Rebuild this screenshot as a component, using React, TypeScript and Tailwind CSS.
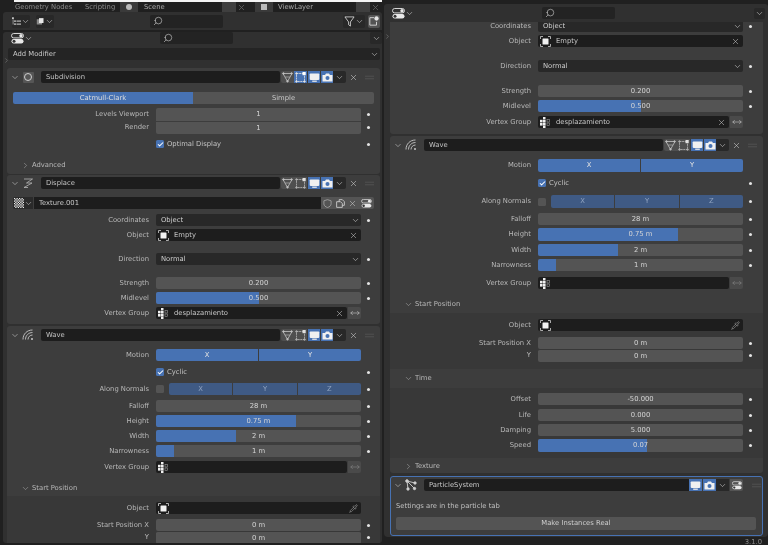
import React from "react";
import { Search, Pipette, MoveHorizontal, X, ChevronDown, ChevronRight, Check } from "lucide-react";

const FONT = "[font-family:'DejaVu_Sans',sans-serif]";

const Chev = ({ c = "" }: { c?: string }) => <ChevronDown className={`w-[9px] h-[9px] text-[#c8c8c8] shrink-0 ${c}`} strokeWidth={1.6} />;

const Toggles = ({ c = "w-[13px] h-[11px]" }: { c?: string }) => (
  <svg viewBox="0 0 13 11" className={c}>
    <rect x="0.5" y="0.5" width="12" height="4.4" rx="2.2" fill="none" stroke="#e8e8e8" strokeWidth="0.9" />
    <circle cx="10" cy="2.7" r="1.7" fill="#e8e8e8" />
    <rect x="0.5" y="6" width="12" height="4.4" rx="2.2" fill="#e8e8e8" />
    <circle cx="3" cy="8.2" r="1.5" fill="#333" />
  </svg>
);

const EmptyIcon = () => (
  <svg viewBox="0 0 11 11" className="w-[11px] h-[11px] shrink-0">
    <rect x="2.5" y="2.5" width="6" height="6" rx="0.6" fill="#f2f2f2" />
    <path d="M0.5 3V0.5H3M8 0.5H10.5V3M0.5 8V10.5H3M8 10.5H10.5V8" fill="none" stroke="#cfcfcf" strokeWidth="0.8" />
  </svg>
);

const VGroup = () => (
  <svg viewBox="0 0 11 11" className="w-[11px] h-[11px] shrink-0" fill="#f0f0f0">
    <rect x="3" y="0" width="2.5" height="2.5" />
    <rect x="0" y="2.8" width="2.6" height="2.6" />
    <rect x="3" y="3" width="2.6" height="2.6" />
    <rect x="0" y="6" width="2.6" height="2.6" />
    <rect x="3" y="6" width="2.6" height="2.6" />
    <rect x="3" y="8.8" width="2.5" height="2.2" />
    <rect x="7" y="2.5" width="2.5" height="2.5" fill="none" stroke="#999" strokeWidth="0.6" />
    <rect x="7" y="6" width="2.5" height="2.5" fill="none" stroke="#999" strokeWidth="0.6" />
  </svg>
);

const Cage = () => (
  <svg viewBox="0 0 11 11" className="w-[11px] h-[11px]" fill="none" stroke="#c4c4c4" strokeWidth="0.8">
    <path d="M1 1.5H10L5.5 9.5Z" />
    <path d="M3.2 5H7.8" strokeWidth="0.6" />
    <circle cx="1.5" cy="1.5" r="0.8" fill="#c4c4c4" />
    <circle cx="9.5" cy="1.5" r="0.8" fill="#c4c4c4" />
    <circle cx="5.5" cy="9.3" r="0.8" fill="#c4c4c4" />
  </svg>
);
const Edit = ({ on }: { on?: boolean }) => (
  <svg viewBox="0 0 11 11" className="w-[11px] h-[11px]" fill="none" stroke={on ? "#e2e2e2" : "#b4b4b4"} strokeWidth="0.8">
    <rect x="1.5" y="1.5" width="8" height="8" strokeDasharray="2 0.6" />
    <rect x="7.5" y="0" width="3.2" height="3.2" fill={on ? "#fff" : "#e0e0e0"} stroke="none" />
    <circle cx="1.5" cy="1.5" r="0.8" fill={on ? "#e2e2e2" : "#b4b4b4"} />
    <circle cx="1.5" cy="9.5" r="0.8" fill={on ? "#e2e2e2" : "#b4b4b4"} />
    <circle cx="9.5" cy="9.5" r="0.8" fill={on ? "#e2e2e2" : "#b4b4b4"} />
  </svg>
);
const Monitor = () => (
  <svg viewBox="0 0 11 11" className="w-[11px] h-[11px]">
    <rect x="0.7" y="1.5" width="9.6" height="6.4" rx="0.8" fill="#f0f0f0" />
    <rect x="3.2" y="8.6" width="4.6" height="1.2" fill="#f0f0f0" />
  </svg>
);
const Camera = () => (
  <svg viewBox="0 0 11 11" className="w-[11px] h-[11px]">
    <path d="M0.5 3H3L4 1.5H7L8 3H10.5V9.5H0.5Z" fill="#f0f0f0" />
    <circle cx="5.5" cy="6" r="2" fill="#4772b3" />
  </svg>
);
const Grip = ({ c = "" }: { c?: string }) => (
  <svg viewBox="0 0 14 6" className={`w-[9px] h-[5px] ${c}`} stroke="#5c5c5c" strokeWidth="1">
    <path d="M0 1H14M0 5H14" />
  </svg>
);

const SubIcon = () => (
  <div className="w-[11px] h-[11px] rounded-[1px] bg-[#565656] flex items-center justify-center">
    <div className="w-[8px] h-[8px] rounded-full border border-[#d0d0d0]" />
  </div>
);
const DispIcon = () => (
  <svg viewBox="0 0 12 12" className="w-[12px] h-[12px]" fill="none" stroke="#b8b8b8" strokeWidth="0.8">
    <path d="M2 2H10.5L4.5 6H10L2 10.5M2 10.5H6" />
  </svg>
);
const WaveIcon = () => (
  <svg viewBox="0 0 12 12" className="w-[12px] h-[12px]" fill="none" stroke="#c8c8c8" strokeWidth="0.9">
    <path d="M1 10.5C1 5 5 1 10.5 1M3.5 10.5C3.5 6.6 6.6 3.5 10.5 3.5M6 10.5C6 8 8 6 10.5 6" />
    <circle cx="10" cy="10" r="1" fill="#c8c8c8" stroke="none" />
  </svg>
);
const PartIcon = () => (
  <svg viewBox="0 0 12 12" className="w-[12px] h-[12px]" fill="none" stroke="#d0d0d0" strokeWidth="0.9">
    <path d="M2 2L3 10M2 2L10 4M2 2L9 9" />
    <circle cx="2" cy="2" r="1.3" fill="#d0d0d0" />
    <circle cx="3" cy="10" r="1.2" fill="#d0d0d0" />
    <circle cx="10" cy="4" r="1.2" fill="#d0d0d0" />
    <circle cx="9.5" cy="9.5" r="1.2" fill="#d0d0d0" />
  </svg>
);

const HBtn = ({ bg, children, c = "" }: { bg: string; children: React.ReactNode; c?: string }) => (
  <div className={`w-[13px] h-[12px] flex items-center justify-center shrink-0 ${bg} ${c}`}>{children}</div>
);
const BLUE = "bg-[#4772b3]";
const GREY = "bg-[#4f4f4f]";

const Header = ({ icon, name, edit }: { icon: React.ReactNode; name: string; edit?: boolean }) => (
  <div className="flex items-center h-[12px] pl-[3px]">
    <Chev c="w-[10px]" />
    <div className="w-[12px] ml-[2px] flex justify-center">{icon}</div>
    <div className="ml-[7px] w-[239px] h-[12px] rounded-[2px] bg-[#1d1d1d] pl-[5px] flex items-center text-[#c4c4c4]">{name}</div>
    <HBtn bg={GREY} c="ml-[1px] rounded-l-[2px]"><Cage /></HBtn>
    <HBtn bg={edit ? BLUE : GREY}><Edit on={edit} /></HBtn>
    <HBtn bg={BLUE} c="border-l border-[#3a3a3a]"><Monitor /></HBtn>
    <HBtn bg={BLUE} c="border-l border-[#3a3a3a]"><Camera /></HBtn>
    <div className="w-[13px] h-[12px] bg-[#282828] rounded-r-[2px] flex items-center justify-center"><Chev /></div>
    <div className="w-[14px] flex justify-center"><X className="w-[9px] h-[9px] text-[#d0d0d0]" strokeWidth={1.5} /></div>
    <Grip c="ml-[5px]" />
  </div>
);

const Dot = () => (
  <div className="w-[14px] flex justify-center shrink-0"><div className="w-[3px] h-[3px] rounded-full bg-[#e4e4e4]" /></div>
);

const Row = ({ label, children, dot = true, r, c = "h-[12px]" }: { label?: string; children: React.ReactNode; dot?: boolean; r?: boolean; c?: string }) => (
  <div className={`flex items-center ${c}`}>
    <div className={`${r ? "w-[141px]" : "w-[142px]"} text-right text-[#b8b8b8] shrink-0 whitespace-nowrap`}>{label}</div>
    <div className="ml-[7px] w-[205px] h-full flex">{children}</div>
    {dot && <Dot />}
  </div>
);

const Num = ({ v, fill = 0, t = "" }: { v: string; fill?: number; t?: string }) => (
  <div className={`relative w-full h-full bg-[#545454] rounded-[2px] overflow-hidden flex items-center justify-center text-[#d6d6d6] ${t}`}>
    {fill > 0 && <div className="absolute left-0 top-0 bottom-0 bg-[#4772b3]" style={{ width: `${fill}%` }} />}
    <span className="relative">{v}</span>
  </div>
);

const Sel = ({ v }: { v: string }) => (
  <div className="w-full h-full bg-[#282828] rounded-[2px] flex items-center justify-between pl-[5px] pr-[1px] text-[#cfcfcf]">{v}<Chev /></div>
);

const Ptr = ({ icon, v, end }: { icon: React.ReactNode; v?: string; end: React.ReactNode }) => (
  <div className="w-full h-full bg-[#1d1d1d] rounded-[2px] flex items-center pl-[2px] pr-[3px] text-[#c8c8c8]">
    {icon}<span className="ml-[5px] flex-1">{v}</span>{end}
  </div>
);
const XS = () => <X className="w-[9px] h-[9px] text-[#cfcfcf]" strokeWidth={1.4} />;

const VG = ({ name }: { name?: string }) => (
  <>
    <div className="w-[191px] h-full">
      <Ptr icon={<VGroup />} v={name} end={name ? <XS /> : null} />
    </div>
    <div className="ml-[1px] w-[13px] h-full bg-[#4a4a4a] rounded-r-[2px] flex items-center justify-center">
      <MoveHorizontal className={`w-[10px] h-[10px] ${name ? "text-[#dcdcdc]" : "text-[#909090]"}`} strokeWidth={1.2} />
    </div>
  </>
);

const Check1 = ({ label }: { label?: string }) => (
  <div className="flex items-center text-[#c4c4c4]">
    <div className="w-[8px] h-[8px] rounded-[1.5px] bg-[#4772b3] flex items-center justify-center">
      <Check className="w-[7px] h-[7px] text-white" strokeWidth={3.5} />
    </div>
    <span className="ml-[3px]">{label}</span>
  </div>
);

const Seg = ({ items, dim }: { items: string[]; dim?: boolean }) => (
  <div className="w-full h-full flex rounded-[2px] overflow-hidden gap-px">
    {items.map((i) => (
      <div key={i} className={`flex-1 flex items-center justify-center ${dim ? "bg-[#3f5a84] text-[#8fa2bf]" : "bg-[#4772b3] text-[#e2e2e2]"}`}>{i}</div>
    ))}
  </div>
);

const Search1 = ({ c }: { c: string }) => (
  <div className={`h-[12px] w-[73px] rounded-[2px] bg-[#232323] flex items-center pl-[3px] ${c}`}>
    <Search className="w-[10px] h-[10px] text-[#d8d8d8] -scale-x-100" strokeWidth={1.4} />
  </div>
);

const SubHead = ({ label, open, c = "" }: { label: string; open?: boolean; c?: string }) => (
  <div className={`flex items-center pl-[14px] text-[#b8b8b8] ${c}`}>
    {open ? <ChevronDown className="w-[9px] h-[9px]" strokeWidth={1.3} /> : <ChevronRight className="w-[9px] h-[9px]" strokeWidth={1.3} />}
    <span className="ml-[2px]">{label}</span>
  </div>
);

const Panel = ({ children, c = "" }: { children: React.ReactNode; c?: string }) => (
  <div className={`w-[373px] rounded-[3px] bg-[#3d3d3d] ${c}`}>{children}</div>
);

const TopBar = () => (
  <div className="h-[10px] flex items-center overflow-hidden text-[#8c8c8c]">
    <span className="ml-[15px] w-[70px]">Geometry Nodes</span>
    <span className="w-[35px]">Scripting</span>
    <div className="w-[18px] h-[10px] bg-[#3a3a3a] flex items-center justify-center"><div className="w-[6px] h-[6px] rounded-full bg-[#bbb]" /></div>
    <div className="ml-[2px] w-[80px] h-[10px] bg-[#1f1f1f] pl-[4px] text-[#aaa] flex items-center">Scene</div>
    <div className="ml-[2px] w-[14px] h-[10px] bg-[#3f3f3f]" />
    <X className="ml-[1px] w-[9px] h-[9px] text-[#666]" />
    <div className="ml-[9px] w-[18px] h-[10px] bg-[#3a3a3a] flex items-center justify-center"><div className="w-[6px] h-[6px] bg-[#bbb]" /></div>
    <div className="ml-[1px] w-[80px] h-[10px] bg-[#1f1f1f] pl-[4px] text-[#aaa] flex items-center">ViewLayer</div>
    <div className="ml-[2px] w-[14px] h-[10px] bg-[#3f3f3f]" />
    <X className="ml-[1px] w-[9px] h-[9px] text-[#666]" />
  </div>
);

const OutlinerIcon = () => (
  <svg viewBox="0 0 12 12" className="w-[11px] h-[11px]" fill="#dcdcdc">
    <rect x="0" y="0.5" width="2.5" height="2" />
    <rect x="3" y="4.5" width="2" height="2" />
    <rect x="3" y="8.5" width="2" height="2" />
    <rect x="6" y="4.8" width="6" height="1.3" />
    <rect x="6" y="8.8" width="6" height="1.3" />
    <rect x="1" y="3" width="0.8" height="7" />
  </svg>
);

const DispMode = () => (
  <svg viewBox="0 0 12 12" className="w-[11px] h-[11px]">
    <rect x="1" y="3" width="7" height="7" fill="#8a8a8a" />
    <path d="M4 1.5H10V8L4 8Z" fill="#e6e6e6" />
  </svg>
);

const NewIcon = () => (
  <svg viewBox="0 0 12 12" className="w-[10px] h-[10px]" fill="none" stroke="#e4e4e4">
    <path d="M6 2H1V11H9V7" />
    <circle cx="9" cy="3" r="2.6" fill="#e4e4e4" stroke="none" />
  </svg>
);

const Funnel = () => (
  <svg viewBox="0 0 12 12" className="w-[11px] h-[11px]" fill="none" stroke="#dcdcdc" strokeWidth="0.9">
    <path d="M1 1H11L7 6.5V11L5 9.5V6.5Z" />
  </svg>
);

const Left = () => (
  <div className="w-[382px] shrink-0 flex flex-col">
    <div className="h-[2px] ml-[14px] bg-[#f4f4f4]" />
    <TopBar />
    <div className="h-[18px] bg-[#303030] ml-[3px] flex items-center rounded-t-[3px]">
      <div className="ml-[9px] w-[18px] h-[13px] bg-[#282828] rounded-[2px] flex items-center justify-center"><OutlinerIcon /><Chev c="w-[7px] h-[7px]" /></div>
      <div className="ml-[6px] w-[18px] h-[13px] bg-[#282828] rounded-[2px] flex items-center justify-center"><DispMode /><Chev c="w-[7px] h-[7px]" /></div>
      <Search1 c="ml-[96px] h-[13px]" />
      <div className="ml-[120px] w-[22px] h-[13px] bg-[#282828] rounded-[2px] flex items-center justify-center"><Funnel /><Chev c="w-[7px] h-[7px]" /></div>
      <div className="ml-[3px] w-[12px] h-[13px] bg-[#545454] rounded-[2px] flex items-center justify-center"><NewIcon /></div>
    </div>
    <div className="relative mt-[2px] ml-[3px] h-[511px] bg-[#303030] rounded-[3px] overflow-hidden">
      <div className="flex items-center h-[12px] pl-[8px]">
        <Toggles />
        <Chev c="w-[7px] h-[7px]" />
        <Search1 c="ml-[127px]" />
        <div className="ml-[137px] w-[12px] h-[12px] bg-[#282828] rounded-[2px] flex items-center justify-center"><Chev /></div>
      </div>
      <div className="mt-[4px] ml-[5px] w-[372px] h-[12px] bg-[#242424] rounded-[2px] flex items-center justify-between pl-[5px] pr-[1px] text-[#c8c8c8]">Add Modifier<Chev /></div>
      <ChevronRight className="absolute left-0 top-[25px] w-[7px] h-[7px] text-[#999]" strokeWidth={1.5} />
      <div className="ml-[4px] mt-[8px] flex flex-col">
        <Panel c="pt-[3px] pb-[3px]">
          <Header icon={<SubIcon />} name="Subdivision" edit />
          <div className="mt-[9px] ml-[6px] w-[361px] h-[12px] flex rounded-[2px] overflow-hidden">
            <div className="w-[180px] bg-[#4772b3] text-[#dedede] flex items-center justify-center">Catmull-Clark</div>
            <div className="flex-1 bg-[#545454] text-[#c8c8c8] flex items-center justify-center">Simple</div>
          </div>
          <div className="mt-[4px]"><Row label="Levels Viewport" c="h-[13px]"><Num v="1" t="rounded-b-none" /></Row></div>
          <Row label="Render" c="h-[13px]"><Num v="1" t="rounded-t-none border-t border-[#3d3d3d]" /></Row>
          <div className="mt-[4px]"><Row><div className="h-full flex items-center"><Check1 label="Optimal Display" /></div></Row></div>
          <SubHead label="Advanced" c="mt-[9px] h-[12px]" />
        </Panel>
        <Panel c="mt-[1px] pt-[2px] pb-[5px]">
          <Header icon={<DispIcon />} name="Displace" />
          <div className="mt-[8px] ml-[6px] w-[361px] h-[12px] flex">
            <div className="w-[20px] h-full bg-[#2a2a2a] rounded-l-[2px] flex items-center justify-center">
              <svg viewBox="0 0 8 8" className="w-[10px] h-[10px]">
                <rect width="8" height="8" fill="#f0f0f0" />
                <path d="M1 0H2V1H1ZM3 0H4V1H3ZM5 0H6V1H5ZM7 0H8V1H7ZM0 1H1V2H0ZM2 1H3V2H2ZM4 1H5V2H4ZM6 1H7V2H6ZM1 2H2V3H1ZM3 2H4V3H3ZM5 2H6V3H5ZM7 2H8V3H7ZM0 3H1V4H0ZM2 3H3V4H2ZM4 3H5V4H4ZM6 3H7V4H6ZM1 4H2V5H1ZM3 4H4V5H3ZM5 4H6V5H5ZM7 4H8V5H7ZM0 5H1V6H0ZM2 5H3V6H2ZM4 5H5V6H4ZM6 5H7V6H6ZM1 6H2V7H1ZM3 6H4V7H3ZM5 6H6V7H5ZM7 6H8V7H7ZM0 7H1V8H0ZM2 7H3V8H2ZM4 7H5V8H4ZM6 7H7V8H6Z" fill="#222" />
              </svg>
              <Chev c="w-[7px] h-[7px]" />
            </div>
            <div className="w-[287px] ml-[1px] bg-[#1d1d1d] pl-[5px] flex items-center text-[#c8c8c8]">Texture.001</div>
            <div className="flex-1 bg-[#545454] rounded-r-[2px] flex items-center justify-around text-[#d8d8d8]">
              <svg viewBox="0 0 10 10" className="w-[9px] h-[9px]" fill="none" stroke="#a8a8a8" strokeWidth="0.9"><path d="M5 0.7L9 2V5.5C9 7.5 7 8.8 5 9.5C3 8.8 1 7.5 1 5.5V2Z" /></svg>
              <svg viewBox="0 0 10 10" className="w-[9px] h-[9px]" fill="none" stroke="#d8d8d8" strokeWidth="0.9"><path d="M3.5 3V0.7H7L9.3 3V7H7M0.7 3H5L7 5V9.3H0.7Z" /></svg>
              <XS />
              <Toggles c="w-[11px] h-[9px]" />
            </div>
          </div>
          <div className="mt-[5px]"><Row label="Coordinates"><Sel v="Object" /></Row></div>
          <div className="mt-[3px]"><Row label="Object" dot={false}><Ptr icon={<EmptyIcon />} v="Empty" end={<XS />} /></Row></div>
          <div className="mt-[12px]"><Row label="Direction"><Sel v="Normal" /></Row></div>
          <div className="mt-[12px]"><Row label="Strength"><Num v="0.200" /></Row></div>
          <div className="mt-[3px]"><Row label="Midlevel"><Num v="0.500" fill={50} /></Row></div>
          <div className="mt-[3px]"><Row label="Vertex Group" dot={false}><VG name="desplazamiento" /></Row></div>
        </Panel>
        <Panel c="mt-[2px] pt-[3px] pb-[2px]">
          <Header icon={<WaveIcon />} name="Wave" />
          <div className="mt-[8px]"><Row label="Motion" dot={false}><Seg items={["X", "Y"]} /></Row></div>
          <div className="mt-[5px]"><Row><div className="h-full flex items-center"><Check1 label="Cyclic" /></div></Row></div>
          <div className="mt-[5px]"><Row label="Along Normals"><div className="w-[8px] h-[8px] self-center rounded-[1.5px] bg-[#545454] shrink-0" /><div className="ml-[5px] flex-1"><Seg items={["X", "Y", "Z"]} dim /></div></Row></div>
          <div className="mt-[5px]"><Row label="Falloff"><Num v="28 m" /></Row></div>
          <div className="mt-[3px]"><Row label="Height"><Num v="0.75 m" fill={68.5} /></Row></div>
          <div className="mt-[3px]"><Row label="Width"><Num v="2 m" fill={39} /></Row></div>
          <div className="mt-[3px]"><Row label="Narrowness"><Num v="1 m" fill={9} /></Row></div>
          <div className="mt-[4px]"><Row label="Vertex Group" dot={false}><VG /></Row></div>
          <SubHead label="Start Position" open c="mt-[9px] h-[12px]" />
          <div className="mt-[2px] pt-[6px] bg-[#383838]">
            <Row label="Object" dot={false}><Ptr icon={<EmptyIcon />} end={<Pipette className="w-[9px] h-[9px] text-[#b0b0b0]" strokeWidth={1.4} />} /></Row>
            <div className="mt-[5px]"><Row label="Start Position X"><Num v="0 m" /></Row></div>
            <Row label="Y" c="h-[13px]"><Num v="0 m" t="border-t border-[#383838]" /></Row>
          </div>
        </Panel>
      </div>
    </div>
  </div>
);

const Right = () => (
  <div className="relative w-[384px] ml-[2px] mt-[4px] h-[541px] flex flex-col">
    <div className="h-[18px] bg-[#303030] rounded-t-[3px] flex items-center">
      <div className="ml-[8px] flex items-center"><Toggles /><Chev c="w-[7px] h-[7px]" /></div>
      <Search1 c="ml-[128px]" />
      <div className="ml-[139px] w-[11px] h-[11px] bg-[#282828] rounded-[2px] flex items-center justify-center"><Chev /></div>
    </div>
    <div className="relative h-[515px] bg-[#303030] rounded-b-[4px] overflow-hidden pl-[6px]">
      <ChevronRight className="absolute left-0 top-[11px] w-[7px] h-[7px] text-[#999]" strokeWidth={1.5} />
      <Panel c="pb-[6px]">
        <div className="-mt-[2px]"><Row r label="Coordinates"><Sel v="Object" /></Row></div>
        <div className="mt-[3px]"><Row r label="Object" dot={false}><Ptr icon={<EmptyIcon />} v="Empty" end={<XS />} /></Row></div>
        <div className="mt-[13px]"><Row r label="Direction"><Sel v="Normal" /></Row></div>
        <div className="mt-[13px]"><Row r label="Strength"><Num v="0.200" /></Row></div>
        <div className="mt-[3px]"><Row r label="Midlevel"><Num v="0.500" fill={50} /></Row></div>
        <div className="mt-[4px]"><Row r label="Vertex Group" dot={false}><VG name="desplazamiento" /></Row></div>
      </Panel>
      <Panel c="mt-[2px] pt-[3px]">
        <Header icon={<WaveIcon />} name="Wave" />
        <div className="mt-[8px]"><Row r label="Motion" dot={false} c="h-[13px]"><Seg items={["X", "Y"]} /></Row></div>
        <div className="mt-[5px]"><Row r c="h-[12px]"><div className="h-full flex items-center"><Check1 label="Cyclic" /></div></Row></div>
        <div className="mt-[6px]"><Row r label="Along Normals" c="h-[13px]"><div className="w-[8px] h-[8px] self-center rounded-[1.5px] bg-[#545454] shrink-0" /><div className="ml-[5px] flex-1"><Seg items={["X", "Y", "Z"]} dim /></div></Row></div>
        <div className="mt-[5px]"><Row r label="Falloff"><Num v="28 m" /></Row></div>
        <div className="mt-[3px]"><Row r label="Height" c="h-[13px]"><Num v="0.75 m" fill={68.5} /></Row></div>
        <div className="mt-[3px]"><Row r label="Width"><Num v="2 m" fill={39} /></Row></div>
        <div className="mt-[3px]"><Row r label="Narrowness"><Num v="1 m" fill={9} /></Row></div>
        <div className="mt-[6px]"><Row r label="Vertex Group" dot={false}><VG /></Row></div>
        <SubHead label="Start Position" open c="mt-[9px] h-[12px]" />
        <div className="mt-[3px] pt-[6px] pb-[7px] bg-[#383838]">
          <Row r label="Object" dot={false}><Ptr icon={<EmptyIcon />} end={<Pipette className="w-[9px] h-[9px] text-[#b0b0b0]" strokeWidth={1.4} />} /></Row>
          <div className="mt-[6px]"><Row r label="Start Position X"><Num v="0 m" /></Row></div>
          <Row r label="Y" c="h-[13px]"><Num v="0 m" t="border-t border-[#383838]" /></Row>
        </div>
        <SubHead label="Time" open c="h-[19px]" />
        <div className="pt-[5px] pb-[6px] bg-[#383838]">
          <Row r label="Offset"><Num v="-50.000" /></Row>
          <div className="mt-[4px]"><Row r label="Life"><Num v="0.000" /></Row></div>
          <div className="mt-[3px]"><Row r label="Damping"><Num v="5.000" /></Row></div>
          <div className="mt-[3px]"><Row r label="Speed" c="h-[13px]"><Num v="0.07" fill={53} /></Row></div>
        </div>
        <SubHead label="Texture" c="h-[15px] pt-[1px]" />
      </Panel>
      <div className="mt-[3px] w-[373px] h-[60px] rounded-[3px] bg-[#3d3d3d] border border-[#4772b3] pt-[2px]">
        <div className="flex items-center h-[12px] pl-[2px]">
          <Chev c="w-[10px]" />
          <div className="w-[12px] ml-[2px] flex justify-center"><PartIcon /></div>
          <div className="ml-[7px] w-[265px] h-[12px] rounded-l-[2px] bg-[#1d1d1d] pl-[5px] flex items-center text-[#c8c8c8]">ParticleSystem</div>
          <HBtn bg={BLUE}><Monitor /></HBtn>
          <HBtn bg={BLUE} c="ml-[1px]"><Camera /></HBtn>
          <div className="w-[13px] h-[12px] bg-[#282828] flex items-center justify-center"><Chev /></div>
          <div className="ml-[1px] w-[13px] h-[12px] bg-[#545454] rounded-r-[2px] flex items-center justify-center"><Toggles c="w-[10px] h-[9px]" /></div>
          <Grip c="ml-[9px]" />
        </div>
        <div className="mt-[9px] ml-[5px] h-[12px] flex items-center text-[#c0c0c0]">Settings are in the particle tab</div>
        <div className="mt-[5px] ml-[5px] w-[360px] h-[13px] bg-[#545454] rounded-[2px] flex items-center justify-center text-[#cfcfcf]">Make Instances Real</div>
      </div>
    </div>
    <div className="absolute right-[6px] top-[535px] text-[#8a8a8a]">3.1.0</div>
  </div>
);

export default function App() {
  return (
    <div className={`w-[768px] h-[545px] overflow-hidden bg-[#202020] flex text-[6.8px] leading-none blur-[0.35px] ${FONT}`}>
      <Left />
      <Right />
    </div>
  );
}
